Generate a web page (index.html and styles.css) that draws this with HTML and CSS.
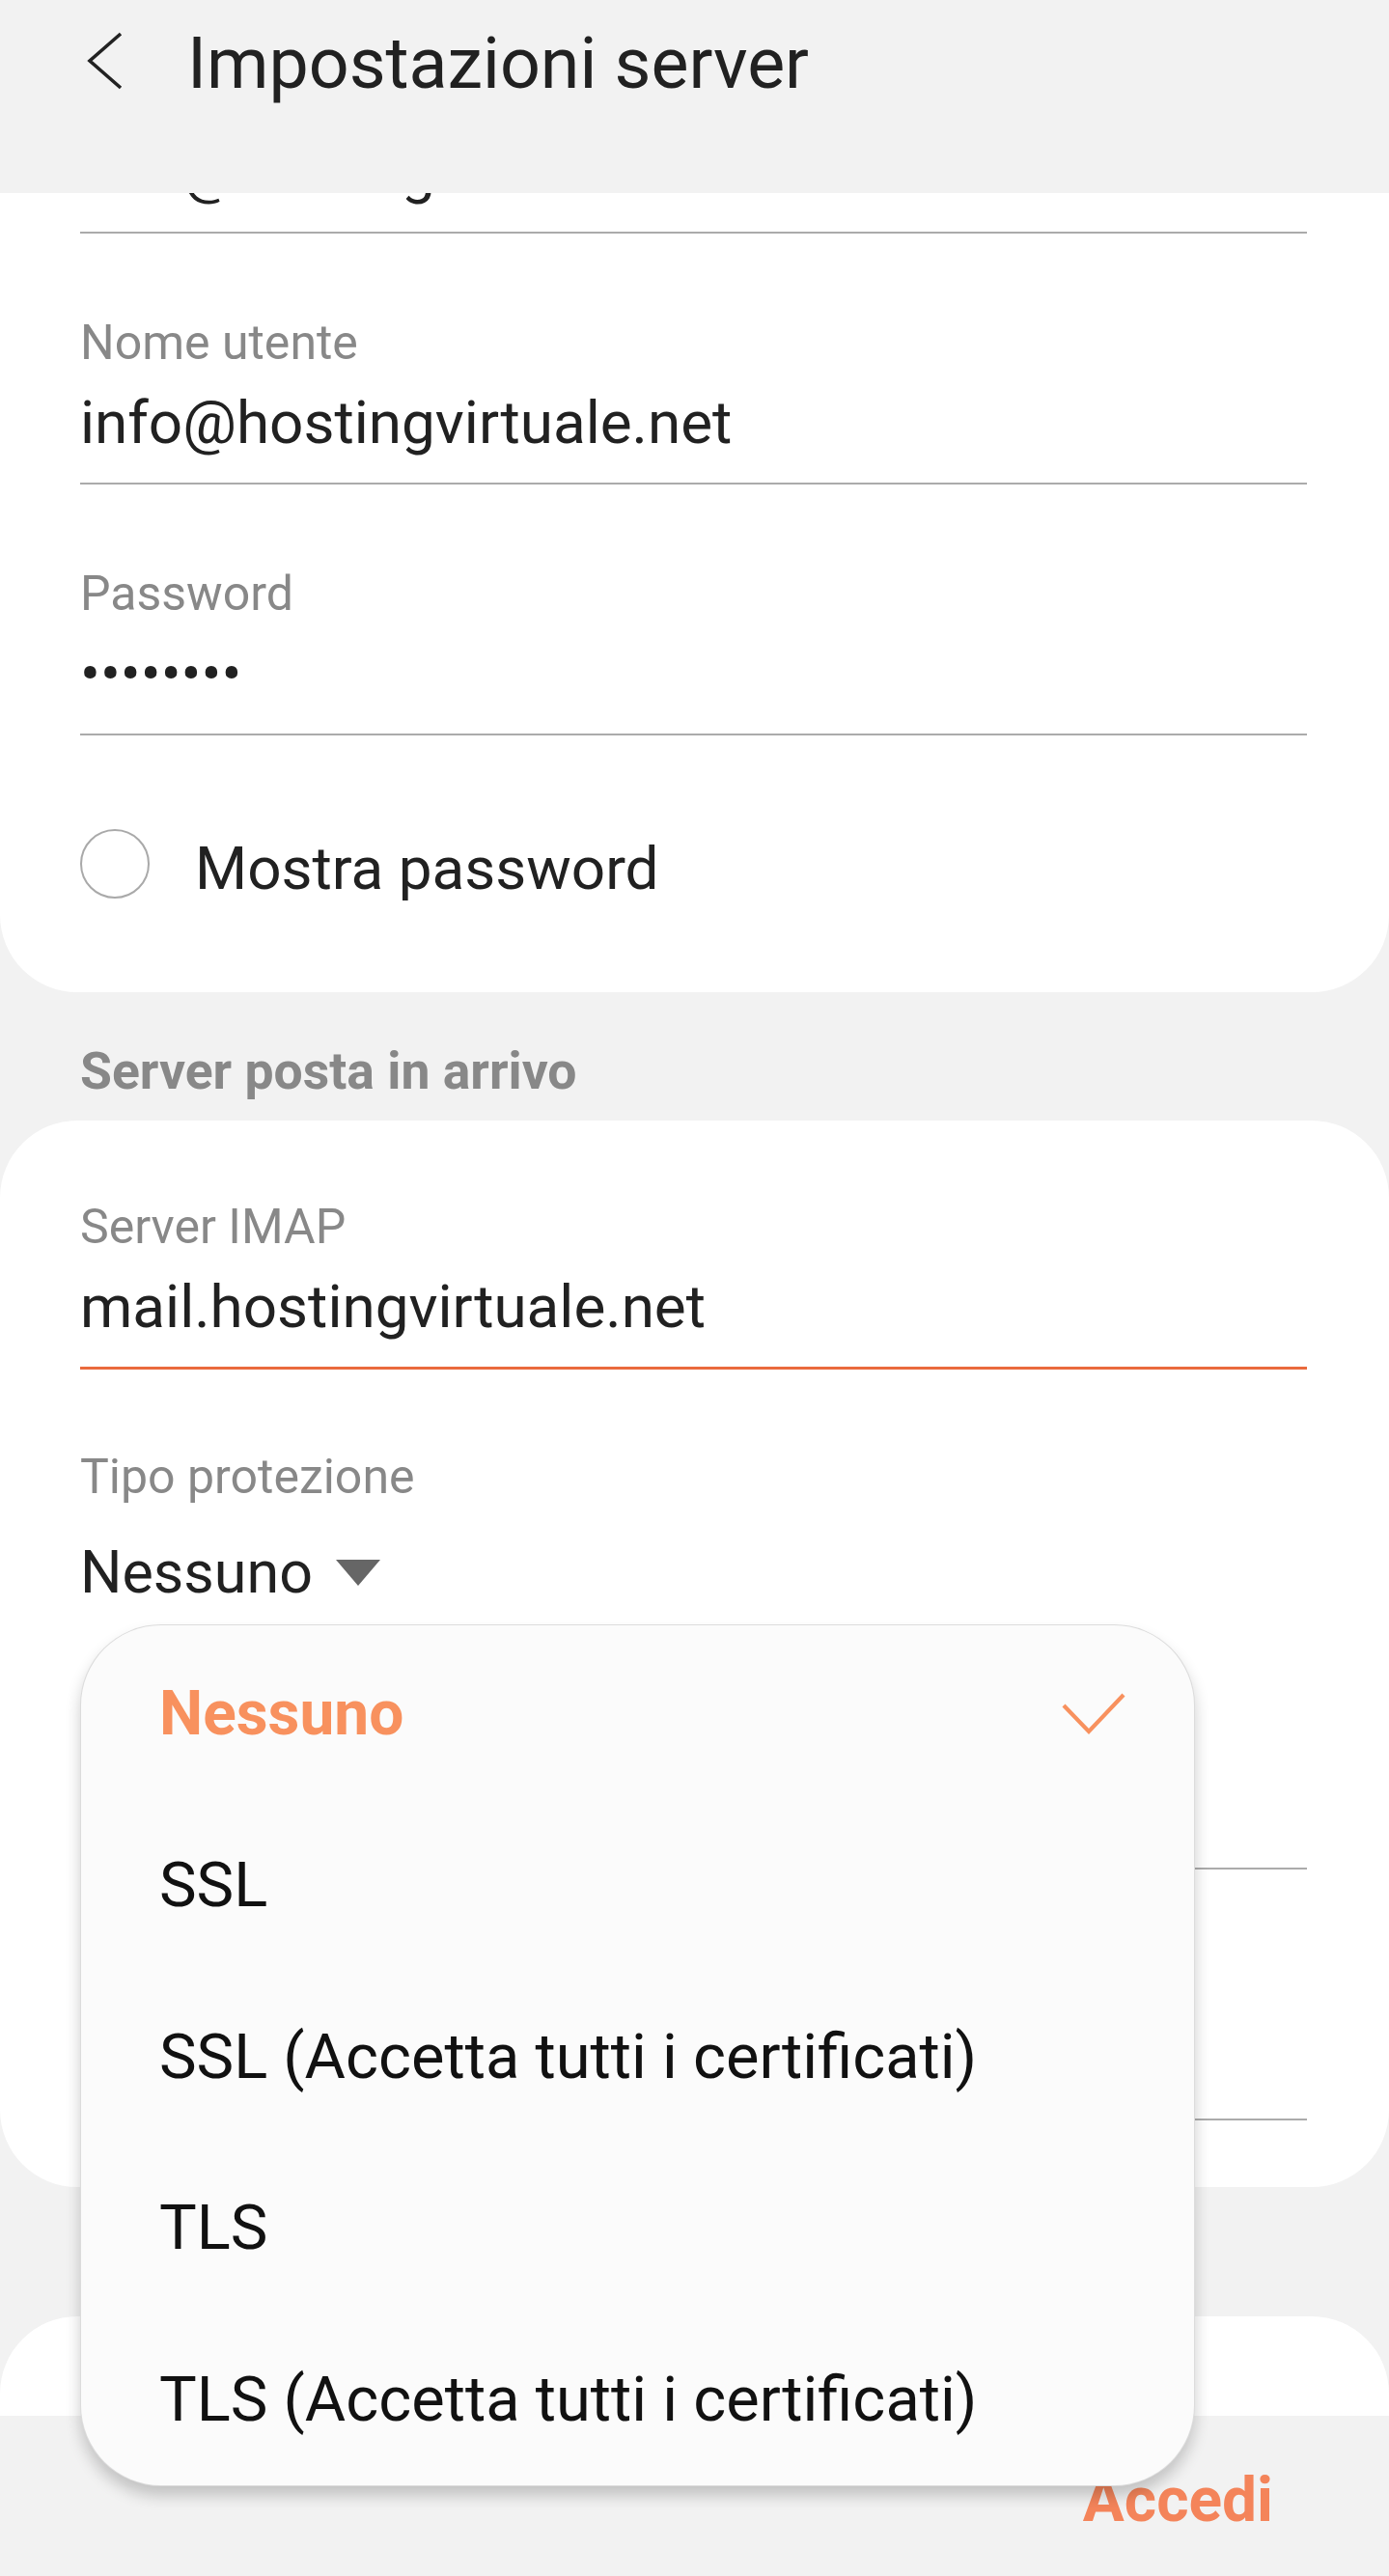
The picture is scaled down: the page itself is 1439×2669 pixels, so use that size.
FILE: index.html
```html
<!DOCTYPE html>
<html lang="it">
<head>
<meta charset="utf-8">
<title>Impostazioni server</title>
<link rel="stylesheet" href="styles.css">
</head>
<body>
<div class="screen">
  <header class="topbar">
    <svg class="back" width="40" height="60" viewBox="0 0 40 60" aria-hidden="true">
      <path d="M37 2 L5 30 L37 58" fill="none" stroke="#222" stroke-width="3.6"/>
    </svg>
    <h1 class="title">Impostazioni server</h1>
  </header>

  <main class="content">
    <section class="card card-first">
      <div class="field">
        <div class="label"></div>
        <div class="value">info@hostingvirtuale.net</div>
        <div class="line"></div>
      </div>
      <div class="field">
        <div class="label">Nome utente</div>
        <div class="value">info@hostingvirtuale.net</div>
        <div class="line"></div>
      </div>
      <div class="field">
        <div class="label">Password</div>
        <div class="value dots">••••••••</div>
        <div class="line"></div>
      </div>
      <div class="radio-row">
        <span class="radio"></span>
        <span class="radio-text">Mostra password</span>
      </div>
    </section>

    <h2 class="section-title">Server posta in arrivo</h2>

    <section class="card card-second">
      <div class="field">
        <div class="label">Server IMAP</div>
        <div class="value">mail.hostingvirtuale.net</div>
        <div class="line line-focus"></div>
      </div>
      <div class="field field-select">
        <div class="label">Tipo protezione</div>
        <div class="select">
          <span class="value">Nessuno</span>
          <svg class="caret" width="46" height="27" viewBox="0 0 46 27" aria-hidden="true">
            <path d="M0 0 H46 L23 27 Z" fill="#666"/>
          </svg>
        </div>
      </div>
      <div class="field field-after-select">
        <div class="label"></div>
        <div class="value"></div>
        <div class="line"></div>
      </div>
      <div class="field">
        <div class="label"></div>
        <div class="value"></div>
        <div class="line"></div>
      </div>
    </section>

    <section class="card card-third"></section>
  </main>

  <footer class="bottombar">
    <span class="action">Accedi</span>
  </footer>

  <div class="menu" role="listbox">
    <div class="menu-item selected">
      <span>Nessuno</span>
      <svg class="check" width="66" height="44" viewBox="0 0 66 44" aria-hidden="true">
        <path d="M2 13 L28 40 L64 2" fill="none" stroke="#f8915e" stroke-width="4.2"/>
      </svg>
    </div>
    <div class="menu-item"><span>SSL</span></div>
    <div class="menu-item"><span>SSL (Accetta tutti i certificati)</span></div>
    <div class="menu-item"><span>TLS</span></div>
    <div class="menu-item"><span>TLS (Accetta tutti i certificati)</span></div>
  </div>
</div>
</body>
</html>
```

FILE: styles.css
```css
* {
  box-sizing: border-box;
}

html, body {
  margin: 0;
  padding: 0;
}

body {
  font-family: Roboto, "Noto Sans", "Liberation Sans", sans-serif;
  background: #f2f2f2;
  color: #212121;
}

.screen {
  position: relative;
  width: 1439px;
  height: 2669px;
  display: flex;
  flex-direction: column;
  overflow: hidden;
  background: #f2f2f2;
}

/* Header */
.topbar {
  flex: none;
  height: 200px;
  display: flex;
  align-items: flex-start;
  padding-top: 23px;
  background: #f2f2f2;
  position: relative;
  z-index: 1;
}

.back {
  flex: none;
  margin-left: 88px;
  margin-top: 10px;
}

.title {
  margin: 0 0 0 66px;
  font-size: 73.5px;
  line-height: 86px;
  font-weight: 400;
  color: #212121;
}

/* Scrolling content */
.content {
  flex: 1;
  min-height: 0;
  overflow: hidden;
}

.card {
  background: #ffffff;
  border-radius: 80px;
  padding: 0 85px 0 83px;
}

.card-first {
  margin-top: -219px;
  padding-top: 84px;
  padding-bottom: 91px;
}

.card-second {
  padding-top: 80px;
  padding-bottom: 69px;
}

.card-third {
  margin-top: 134px;
  height: 320px;
}

.field + .field {
  margin-top: 83px;
}

.label {
  height: 60px;
  font-size: 50px;
  line-height: 60px;
  color: #888888;
}

.value {
  display: block;
  height: 74px;
  margin-top: 16px;
  font-size: 62px;
  line-height: 74px;
  color: #212121;
  white-space: nowrap;
}

.line {
  height: 2px;
  margin-top: 25px;
  background: #ababab;
}

.line-focus {
  height: 3px;
  background: #ea6a3d;
}

.field.field-select {
  margin-top: 81px;
}

.select {
  display: flex;
  align-items: center;
  margin-top: 32px;
}

.select .value {
  margin-top: 0;
  font-size: 61px;
}

.caret {
  flex: none;
  margin-left: 24px;
}

.field.field-after-select {
  margin-top: 94px;
}

/* Radio */
.radio-row {
  display: flex;
  align-items: flex-start;
  margin-top: 97px;
}

.radio {
  flex: none;
  width: 72px;
  height: 72px;
  border: 2px solid #a9a9a9;
  border-radius: 50%;
}

.radio-text {
  margin-top: 4px;
  margin-left: 47px;
  font-size: 62px;
  line-height: 74px;
  color: #212121;
}

/* Section title */
.section-title {
  margin: 0;
  padding: 50px 83px 19px;
  font-size: 53.5px;
  line-height: 64px;
  font-weight: 700;
  color: #888888;
}

/* Footer */
.bottombar {
  flex: none;
  height: 166px;
  padding: 50px 120px 0 0;
  text-align: right;
  background: #f2f2f2;
}

.action {
  font-size: 64px;
  line-height: 76px;
  font-weight: 700;
  color: #f4845a;
}

/* Dropdown menu overlay */
.menu {
  position: absolute;
  top: 1683px;
  left: 83px;
  width: 1155px;
  padding-top: 3px;
  background: #fbfbfb;
  border: 1px solid rgba(0, 0, 0, 0.12);
  border-radius: 84px;
  box-shadow: 0 10px 16px rgba(0, 0, 0, 0.2);
  z-index: 2;
}

.menu-item {
  display: flex;
  align-items: center;
  justify-content: space-between;
  height: 177.5px;
  padding: 0 71px 0 81px;
  font-size: 65px;
  line-height: 76px;
  color: #111111;
  white-space: nowrap;
}

.menu-item.selected {
  font-weight: 700;
  font-size: 64px;
  color: #f8915e;
}

.check {
  flex: none;
}
```
